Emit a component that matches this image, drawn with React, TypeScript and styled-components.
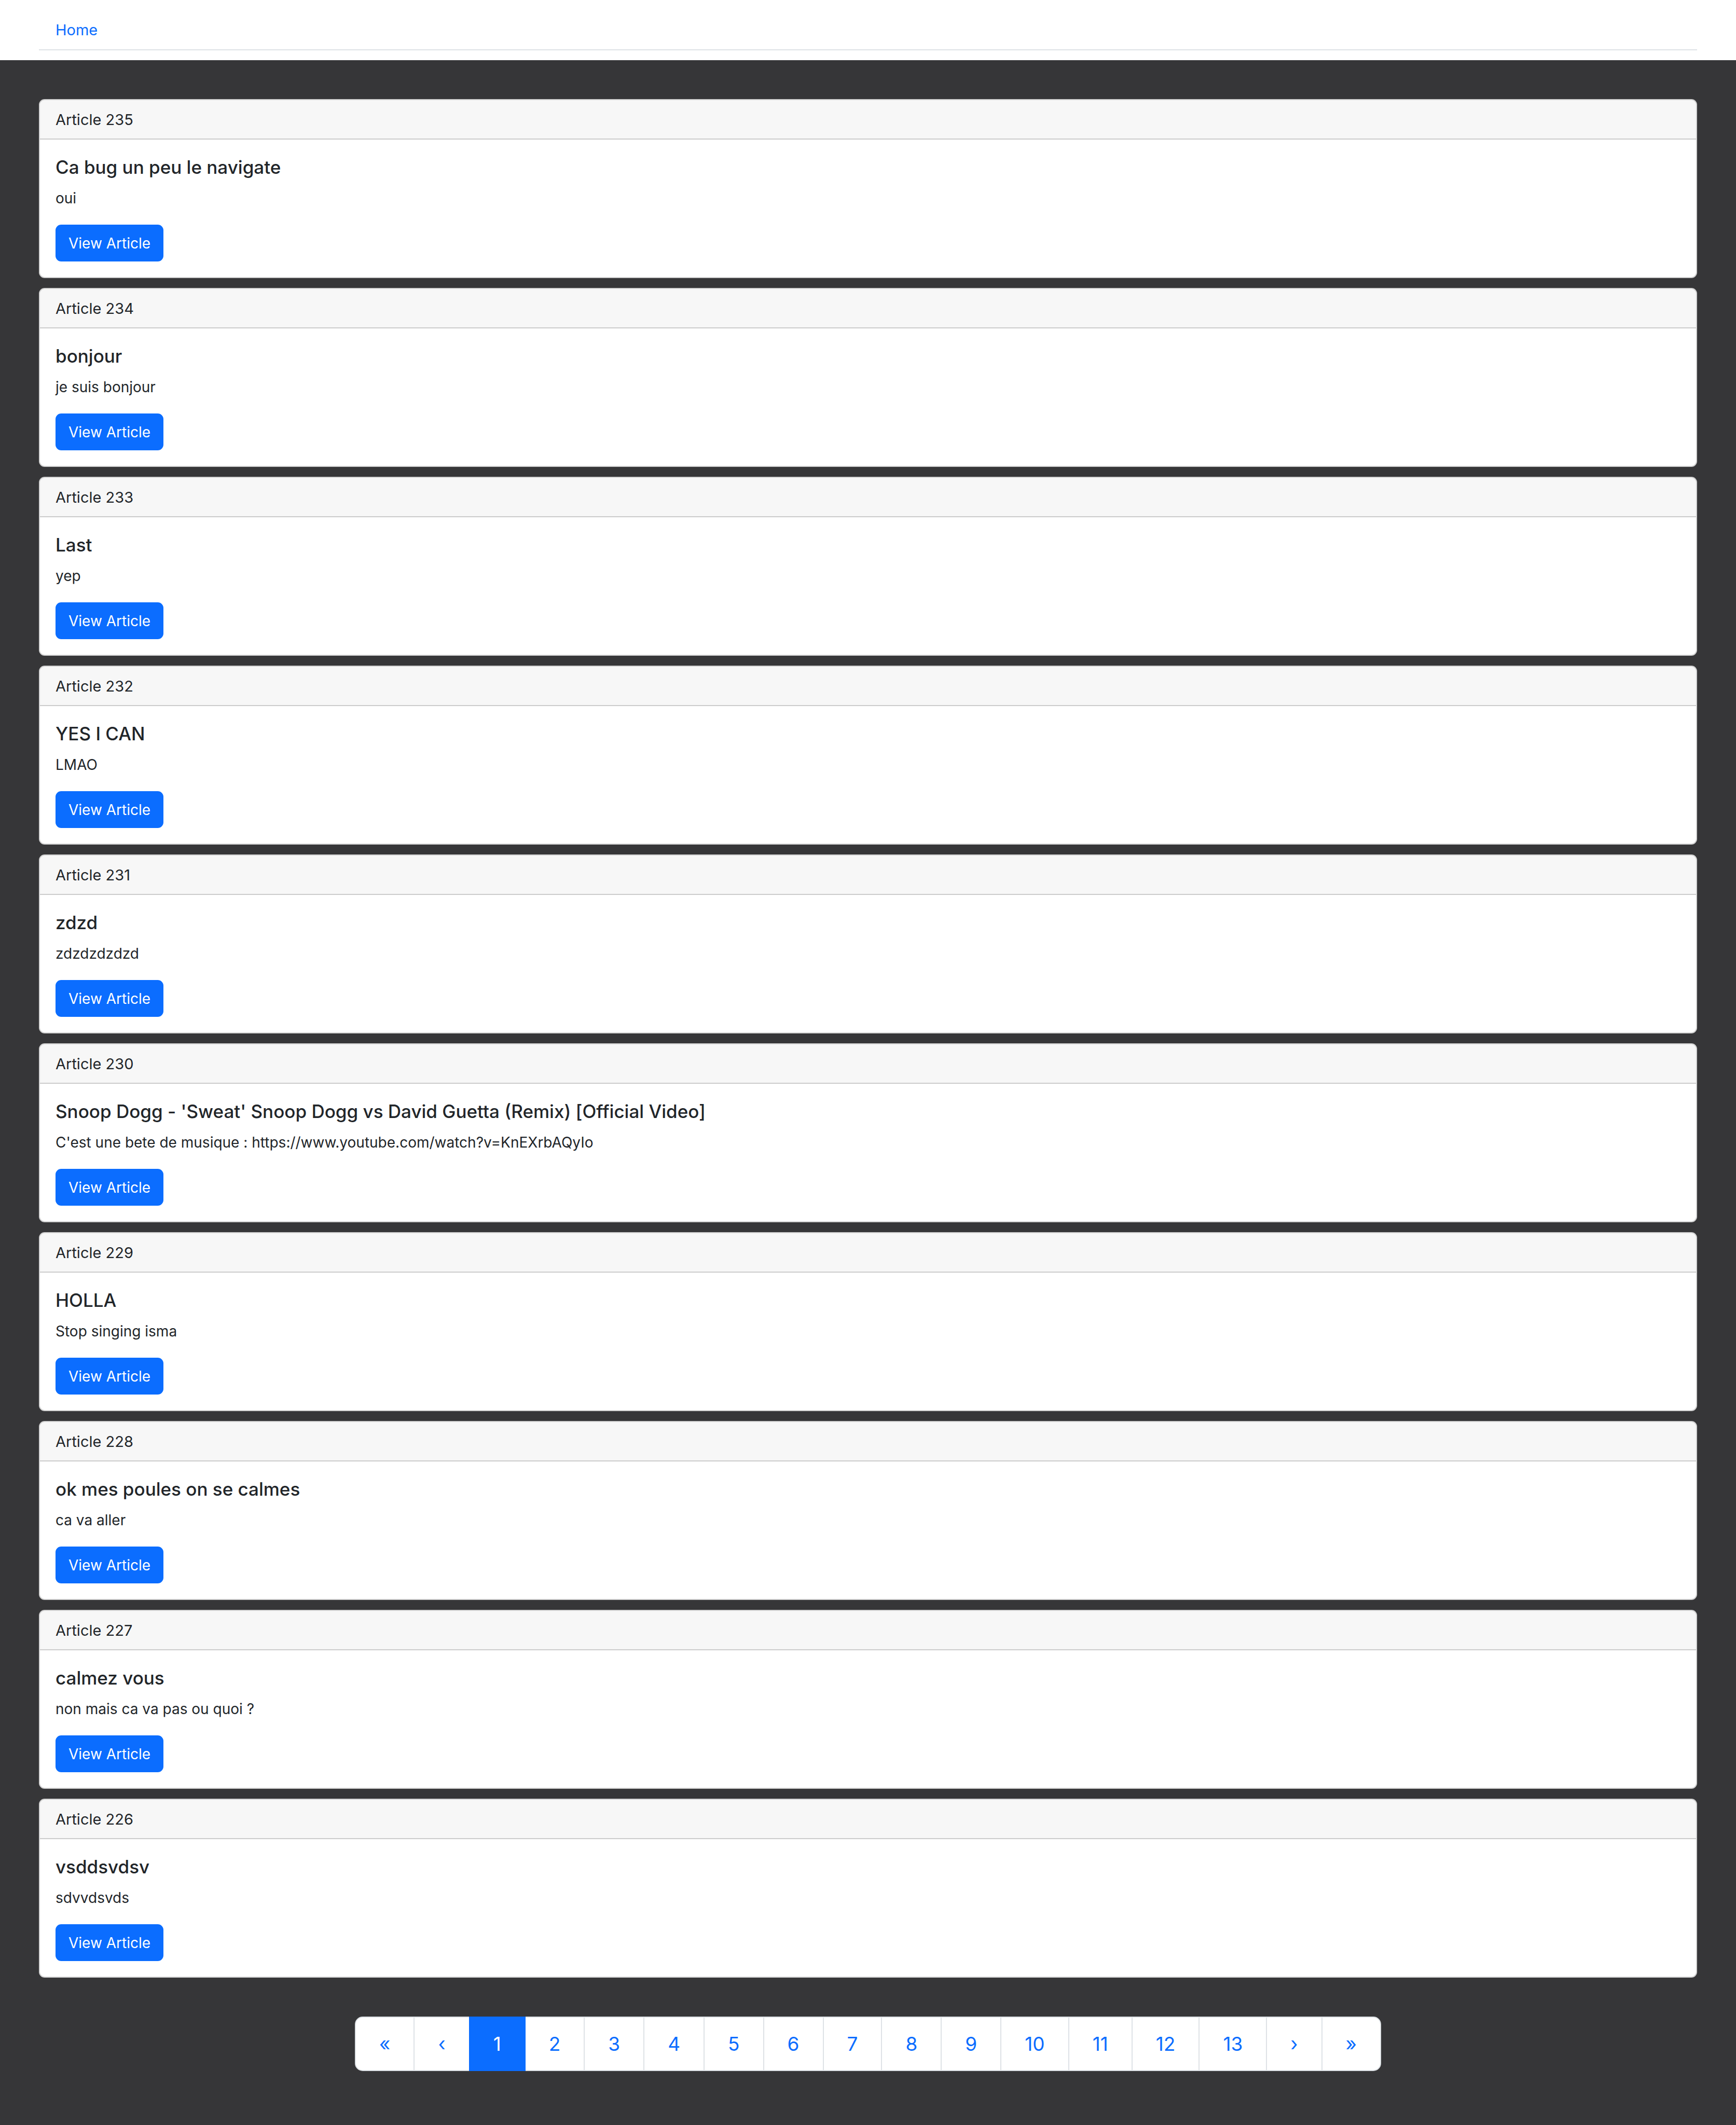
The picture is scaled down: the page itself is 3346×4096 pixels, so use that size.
import React from "react";
import styled, { createGlobalStyle } from "styled-components";

const GlobalStyle = createGlobalStyle`
  *, *::before, *::after { box-sizing: border-box; }
  body {
    margin: 0;
    background: #363638;
    color: #212529;
    font-family: Inter, "Liberation Sans", sans-serif;
    font-size: 29px;
    line-height: 44px;
  }
`;

const Header = styled.header`
  padding: 19px 75px;
  background: #fff;
`;

const Nav = styled.nav`
  display: flex;
  border-bottom: 2px solid #dee2e6;
`;

const NavLink = styled.a`
  padding: 17px 32px 15px;
  color: #0b6dff;
  text-decoration: none;
`;

const Main = styled.main`
  display: flex;
  flex-direction: column;
  gap: 75px;
  padding: 75px 75px 104px;
`;

const ArticleList = styled.div`
  display: flex;
  flex-direction: column;
  gap: 19px;
`;

const Card = styled.article`
  border: 2px solid rgba(0, 0, 0, 0.175);
  border-radius: 11px;
  background: #fff;
`;

const CardHeader = styled.div`
  padding: 16px 30px 14px;
  border-bottom: 2px solid rgba(0, 0, 0, 0.175);
  border-radius: 9px 9px 0 0;
  background: rgba(0, 0, 0, 0.03);
`;

const CardBody = styled.div`
  display: flex;
  flex-direction: column;
  align-items: flex-start;
  padding: 30px;
`;

const CardTitle = styled.h5`
  margin: 0 0 15px;
  font-size: 35px;
  font-weight: 500;
  line-height: 46px;
`;

const CardText = styled.p`
  margin: 0 0 29px;
  font-size: 28px;
`;

const Button = styled.button`
  padding: 12px 23px 11px;
  border: 2px solid #0b6dff;
  border-radius: 11px;
  background: #0b6dff;
  color: #fff;
  font: inherit;
  font-size: 28px;
  line-height: 44px;
  cursor: pointer;
`;

const Pagination = styled.ul`
  display: flex;
  justify-content: center;
  margin: 0;
  padding: 0;
  list-style: none;
`;

const PageItem = styled.li`
  &:not(:first-child) { margin-left: -2px; }
  &:first-child > a { border-radius: 15px 0 0 15px; }
  &:last-child > a { border-radius: 0 15px 15px 0; }
`;

const PageLink = styled.a<{ $active?: boolean }>`
  display: block;
  position: relative;
  z-index: ${(p) => (p.$active ? 1 : 0)};
  padding: 22px 45px;
  border: 2px solid ${(p) => (p.$active ? "#0b6dff" : "#dee2e6")};
  background: ${(p) => (p.$active ? "#0b6dff" : "#fff")};
  color: ${(p) => (p.$active ? "#fff" : "#0b6dff")};
  font-size: 37px;
  line-height: 57px;
  text-decoration: none;
`;

const articles = [
  { id: 235, title: "Ca bug un peu le navigate", text: "oui" },
  { id: 234, title: "bonjour", text: "je suis bonjour" },
  { id: 233, title: "Last", text: "yep" },
  { id: 232, title: "YES I CAN", text: "LMAO" },
  { id: 231, title: "zdzd", text: "zdzdzdzdzd" },
  {
    id: 230,
    title: "Snoop Dogg - 'Sweat' Snoop Dogg vs David Guetta (Remix) [Official Video]",
    text: "C'est une bete de musique : https://www.youtube.com/watch?v=KnEXrbAQyIo",
  },
  { id: 229, title: "HOLLA", text: "Stop singing isma" },
  { id: 228, title: "ok mes poules on se calmes", text: "ca va aller" },
  { id: 227, title: "calmez vous", text: "non mais ca va pas ou quoi ?" },
  { id: 226, title: "vsddsvdsv", text: "sdvvdsvds" },
];

const pages = ["«", "‹", ...Array.from({ length: 13 }, (_, i) => String(i + 1)), "›", "»"];

export default function App() {
  return (
    <>
      <GlobalStyle />
      <Header>
        <Nav>
          <NavLink href="#">Home</NavLink>
        </Nav>
      </Header>
      <Main>
        <ArticleList>
          {articles.map((a) => (
            <Card key={a.id}>
              <CardHeader>Article {a.id}</CardHeader>
              <CardBody>
                <CardTitle>{a.title}</CardTitle>
                <CardText>{a.text}</CardText>
                <Button type="button">View Article</Button>
              </CardBody>
            </Card>
          ))}
        </ArticleList>
        <nav aria-label="Pagination">
          <Pagination>
            {pages.map((p) => (
              <PageItem key={p}>
                <PageLink href="#" $active={p === "1"} aria-current={p === "1" ? "page" : undefined}>
                  {p}
                </PageLink>
              </PageItem>
            ))}
          </Pagination>
        </nav>
      </Main>
    </>
  );
}
